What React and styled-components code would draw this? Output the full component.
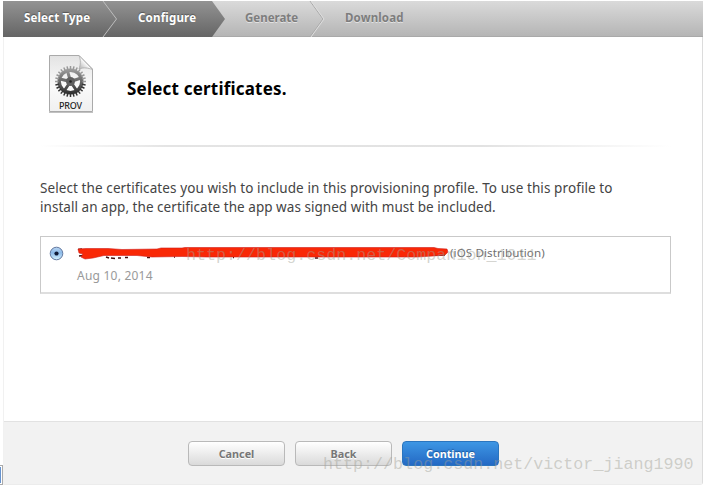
import React from "react";
import styled, { createGlobalStyle } from "styled-components";

const GlobalStyle = createGlobalStyle`
  * { box-sizing: border-box; }
  html, body { margin: 0; background: #fff; overflow: hidden; }
  body { font-family: "Noto Sans", "Open Sans", sans-serif; }
`;

const Page = styled.div`
  position: relative;
  width: 705px;
  height: 490px;
  padding: 1px 2px 5px 3px;
  overflow: hidden;
  background: #fff;
`;

const Panel = styled.main`
  display: flex;
  flex-direction: column;
  width: 700px;
  height: 484px;
  border-right: 1px solid #dcdcdc;
  border-left: 1px solid #f1f1f1;
  border-bottom: 1px solid #ececec;
  border-radius: 0 0 3px 0;
`;

const Steps = styled.nav`
  position: relative;
  flex: none;
  width: 700px;
  height: 36px;
  margin-left: -1px;
  display: grid;
  grid-template-columns: 110px 108px 101px 1fr;
  border-bottom: 1px solid #a9a9a9;
  background: linear-gradient(#dadada, #b5b5b5);
`;

const StepShapes = styled.svg`
  position: absolute;
  inset: 0;
`;

const Step = styled.span`
  position: relative;
  padding-left: ${(p) => p.$indent}px;
  line-height: 33px;
  font-size: 11.5px;
  font-weight: 700;
  letter-spacing: ${(p) => p.$track || 0}px;
  white-space: nowrap;
  color: ${(p) => (p.$done ? "#fff" : "#7d7d7d")};
  text-shadow: ${(p) => (p.$done ? "0 -1px 1px #555" : "0 1px 0 #e2e2e2")};
`;

const Content = styled.section`
  flex: 1;
  padding: 17px 31px 0 36px;
`;

const Heading = styled.header`
  display: flex;
  height: 91px;
  padding-left: 8px;
`;

const Title = styled.h1`
  margin: 22px 0 0 33px;
  font-size: 17px;
  line-height: 26px;
  font-weight: 700;
  letter-spacing: 0.2px;
  color: #000;
`;

const Rule = styled.div`
  height: 2px;
  background: linear-gradient(90deg, #fff, #e4e4e4 20%, #e2e2e2 70%, #fff);
`;

const Copy = styled.p`
  margin: 32px 0 0;
  font-size: 13.5px;
  line-height: 19px;
  color: #444;
  white-space: nowrap;
`;

const Line = styled.span`
  display: block;
  letter-spacing: ${(p) => p.$track}px;
`;

const Certificate = styled.div`
  display: flex;
  width: 631px;
  height: 58px;
  margin-top: 19px;
  padding: 8px 0 0 8px;
  border: 1px solid #c9c9c9;
  border-bottom: 2px solid #dedede;
`;

const Details = styled.div`
  margin-left: 13px;
`;

const NameRow = styled.div`
  display: flex;
  height: 20px;
  line-height: 16px;
`;

const Kind = styled.span`
  margin-left: 2px;
  font-size: 11.6px;
  letter-spacing: 0.1px;
  color: #707070;
  white-space: nowrap;
`;

const Expiry = styled.div`
  font-size: 12px;
  line-height: 22px;
  letter-spacing: 0.22px;
  color: #999;
`;

const Footer = styled.footer`
  display: flex;
  gap: 10px;
  flex: none;
  height: 63px;
  padding: 19px 0 0 184px;
  border-top: 1px solid #e2e2e2;
  background: #f2f2f2;
`;

const Button = styled.button`
  width: 97px;
  height: 25px;
  padding: 0 0 1px;
  border: 1px solid ${(p) => (p.$primary ? "#2b75be" : "#b9b9b9")};
  border-radius: 4px;
  background: ${(p) => (p.$primary ? "linear-gradient(#3d96e4, #2469c4)" : "linear-gradient(#fff, #dadada)")};
  font-family: inherit;
  font-size: 10.8px;
  font-weight: 700;
  color: ${(p) => (p.$primary ? "#fff" : "#777")};
  text-shadow: ${(p) => (p.$primary ? "0 -1px 1px #1c5597" : "0 1px 0 #fff")};
`;

const Watermark = styled.span`
  position: absolute;
  left: ${(p) => p.$x}px;
  top: ${(p) => p.$y}px;
  font-family: "Liberation Mono", monospace;
  font-size: 16.7px;
  line-height: 20px;
  white-space: nowrap;
  color: rgba(160, 160, 150, 0.45);
  pointer-events: none;
`;

const EdgeTab = styled.i`
  position: absolute;
  left: -8px;
  top: 465px;
  width: 11px;
  height: 20px;
  border: 1px solid #aaa;
  background: #6793cf;
  box-shadow: inset 0 0 0 1px #fff;
`;

const TEETH = Array.from({ length: 28 }, (_, i) => (i * 360) / 28);

const ProfileIcon = () => (
  <svg width="46" height="60" viewBox="0 0 46 60">
    <defs>
      <linearGradient id="paper" x2="0" y2="1">
        <stop stopColor="#e3e3e3" />
        <stop offset=".55" stopColor="#fafafa" />
        <stop offset="1" stopColor="#f0f0f0" />
      </linearGradient>
      <linearGradient id="gear" x1="0" y1="12" x2="0" y2="43" gradientUnits="userSpaceOnUse">
        <stop stopColor="#aaa" />
        <stop offset=".5" stopColor="#666" />
        <stop offset="1" stopColor="#222" />
      </linearGradient>
      <linearGradient id="fold" x1="0" y1="1" x2="1" y2="0">
        <stop stopColor="#aaa" />
        <stop offset=".5" stopColor="#fff" />
      </linearGradient>
    </defs>
    <path d="M1.5 1.5H31L44.500 15V57.500H1.500Z" fill="url(#paper)" stroke="#aaa" />
    <path d="M1 58.500H45" stroke="#999" opacity=".6" />
    <g stroke="url(#gear)" fill="none">
      <circle cx="22.500" cy="27.500" r="11.300" strokeWidth="3.400" />
      {TEETH.map((a) => (
        <path key={a} d="M22.500 15.500L22.510 12" stroke={a > 90 && a < 270 ? "#333" : "#999"} strokeWidth="1.500" transform={`rotate(${a} 22.500 27.500)`} />
      ))}
      <path d="M22.500 27.500L19.500 17M22.500 27.500L33 24M22.500 27.500L28.500 36.500M22.500 27.500L16.500 36.500M22.500 27.500L12 25" strokeWidth="3" />
    </g>
    <circle cx="22.500" cy="27.500" r="4.500" fill="#606060" />
    <circle cx="22.500" cy="27.500" r="1.300" fill="#222" />
    <path d="M31 1.500C33 6 32.500 11 31 15C36 13 40 14 44.500 15.500Z" fill="url(#fold)" stroke="#aaa" strokeWidth=".8" />
    <text x="22.500" y="54.500" textAnchor="middle" fontFamily="Noto Sans, sans-serif" fontSize="9" fontWeight="500" fill="#222" textLength="23">PROV</text>
  </svg>
);

const Radio = () => (
  <svg width="15" height="17" viewBox="0 0 15 17">
    <defs>
      <linearGradient id="radio" x2="0" y2="1">
        <stop stopColor="#b9d5f2" />
        <stop offset=".45" stopColor="#8ab9e8" />
        <stop offset="1" stopColor="#d6f3ff" />
      </linearGradient>
    </defs>
    <circle cx="7.500" cy="8.500" r="6.300" fill="url(#radio)" stroke="#6379a0" />
    <circle cx="7.500" cy="8.500" r="2.100" fill="#101b36" />
  </svg>
);

const Redaction = () => (
  <svg width="371" height="18" viewBox="0 0 371 18">
    <path d="M1 4.500L5 4M2 11L6 10.500M29 12L32 13M34 13L38 13.500M41 13H44M48 12.500H51M70 12.500H73M97 12H98M156 12.500H157M238 13H241M344 10H368" stroke="#401010" strokeWidth="1.500" />
    <path d="M1 4L9 3.500L31 3.500L45 4.500L80 4L84 3H105L108 2.500H357L361 3.500L370 4L371 7L368 10L356 11L340 12H130L105 11.500L75 12L60 10.500L27 10.500L16 13L8 14L4 12L6 9L2 8Z" fill="#f92806" stroke="#cf1c19" strokeWidth=".6" />
  </svg>
);

const App = () => (
  <Page>
    <GlobalStyle />
    <Panel>
      <Steps>
        <StepShapes width="700" height="36">
          <defs>
            <linearGradient id="done" x2="0" y2="1">
              <stop stopColor="#939393" />
              <stop offset="1" stopColor="#656565" />
            </linearGradient>
          </defs>
          <path d="M0 0H209L222 18L209 36H0Z" fill="url(#done)" />
          <path d="M100 0L113.500 18L100 36" fill="none" stroke="#bdbdbd" />
          <path d="M307 0L320 18L307 36" fill="none" stroke="#a8a8a8" />
          <path d="M308 0L321 18L308 36" fill="none" stroke="#dedede" />
        </StepShapes>
        <Step $done $indent={21} $track={0.15}>Select Type</Step>
        <Step $done $indent={25} $track={0.2}>Configure</Step>
        <Step $indent={24}>Generate</Step>
        <Step $indent={23} $track={0.15}>Download</Step>
      </Steps>
      <Content>
        <Heading>
          <ProfileIcon />
          <Title>Select certificates.</Title>
        </Heading>
        <Rule />
        <Copy>
          <Line $track={0.09}>Select the certificates you wish to include in this provisioning profile. To use this profile to</Line>
          <Line $track={0.04}>install an app, the certificate the app was signed with must be included.</Line>
        </Copy>
        <Certificate>
          <Radio />
          <Details>
            <NameRow>
              <Redaction />
              <Kind>(iOS Distribution)</Kind>
            </NameRow>
            <Expiry>Aug 10, 2014</Expiry>
          </Details>
        </Certificate>
      </Content>
      <Footer>
        <Button>Cancel</Button>
        <Button>Back</Button>
        <Button $primary>Continue</Button>
      </Footer>
    </Panel>
    <EdgeTab />
    <Watermark $x={186} $y={246}>http://blog.csdn.net/Companion_1011</Watermark>
    <Watermark $x={323} $y={455}>http://blog.csdn.net/victor_jiang1990</Watermark>
  </Page>
);

export default App;
